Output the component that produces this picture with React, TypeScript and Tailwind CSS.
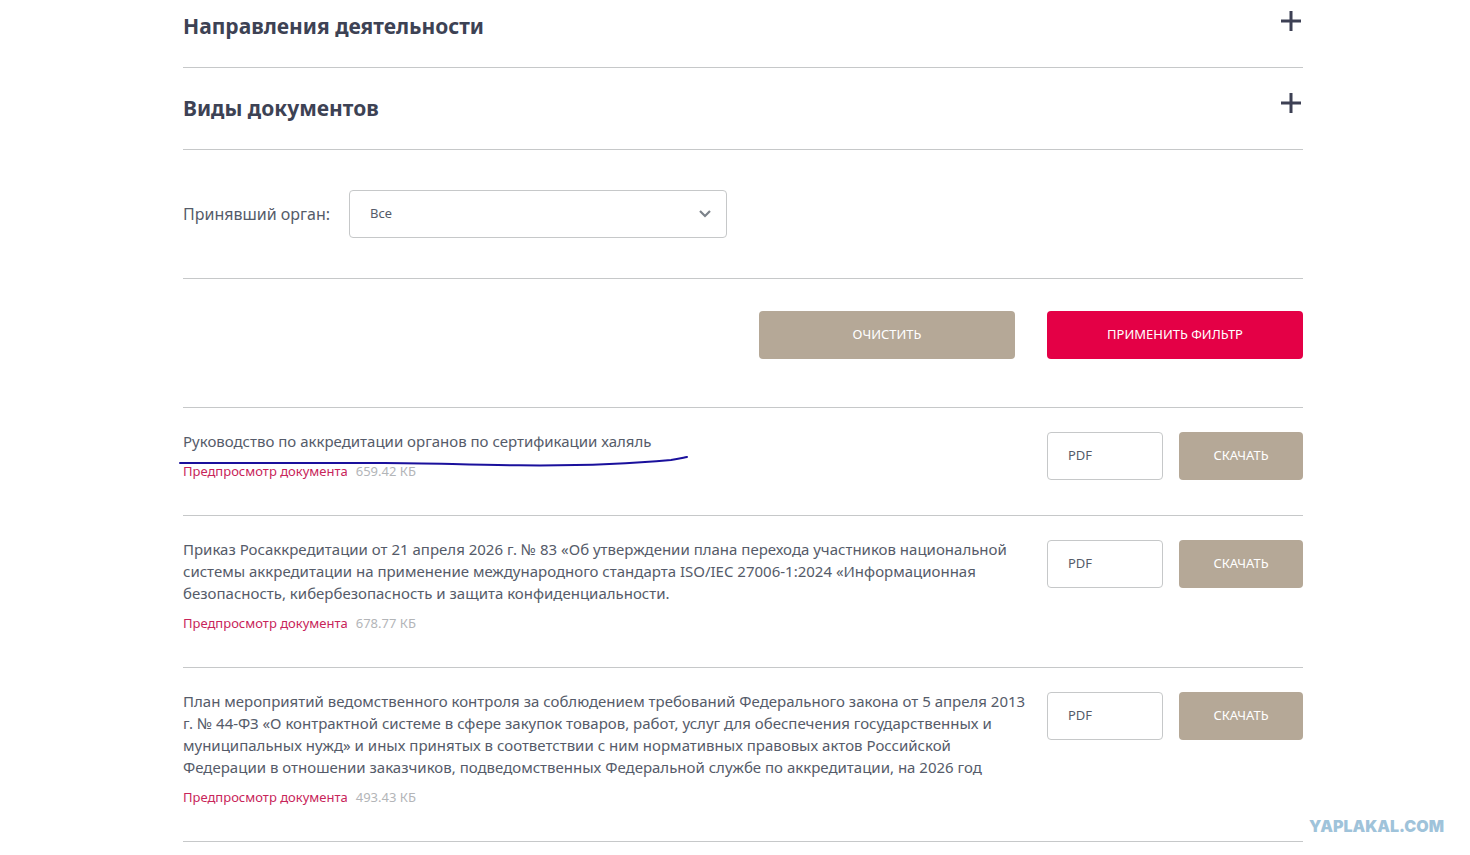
import { useState } from 'react';

type Doc = { lines: string[]; size: string; underlined?: boolean };

const sections = ['Направления деятельности', 'Виды документов'];

const docs: Doc[] = [
  {
    lines: ['Руководство по аккредитации органов по сертификации халяль'],
    size: '659.42 КБ',
    underlined: true,
  },
  {
    lines: [
      'Приказ Росаккредитации от 21 апреля 2026 г. № 83 «Об утверждении плана перехода участников национальной',
      'системы аккредитации на применение международного стандарта ISO/IEC 27006-1:2024 «Информационная',
      'безопасность, кибербезопасность и защита конфиденциальности.',
    ],
    size: '678.77 КБ',
  },
  {
    lines: [
      'План мероприятий ведомственного контроля за соблюдением требований Федерального закона от 5 апреля 2013',
      'г. № 44-ФЗ «О контрактной системе в сфере закупок товаров, работ, услуг для обеспечения государственных и',
      'муниципальных нужд» и иных принятых в соответствии с ним нормативных правовых актов Российской',
      'Федерации в отношении заказчиков, подведомственных Федеральной службе по аккредитации, на 2026 год',
    ],
    size: '493.43 КБ',
  },
];

function Section({ title }: { title: string }) {
  const [open, setOpen] = useState(false);
  return (
    <h2 className="border-b border-[#c6c8c9]">
      <button
        type="button"
        aria-expanded={open}
        onClick={() => setOpen(!open)}
        className="flex w-full items-start justify-between pt-[23px] pb-6 text-left text-[21px] leading-[34px] font-bold text-[#3d4254]"
      >
        {title}
        <svg className="mt-0.5 mr-0.5 h-5 w-5" viewBox="0 0 20 20" fill="none" stroke="#3d4054" strokeWidth="3" aria-hidden="true">
          <path d="M10 0V20M0 10H20" />
        </svg>
      </button>
    </h2>
  );
}

function DocRow({ doc }: { doc: Doc }) {
  return (
    <li className="flex items-start gap-4 border-b border-[#c6c8c9] pt-6 pb-[34px]">
      <div className="-mt-0.5 min-w-0 flex-1">
        <p className="text-[15px] leading-[22px] whitespace-nowrap text-[#555b69]">
          {doc.lines.map((line) => (
            <span key={line} className="block">
              {line}
            </span>
          ))}
        </p>
        <div className="relative mt-[9px] flex gap-2 text-[13px] leading-5">
          <a href="#preview" className="text-[#c8255a]">
            Предпросмотр документа
          </a>
          <span className="text-[#b3b5b8]">{doc.size}</span>
          {doc.underlined && (
            <svg
              className="absolute -top-1.5 -left-1 h-3 w-[512px]"
              viewBox="0 0 512 12"
              fill="none"
              stroke="#1a109c"
              strokeWidth="2"
              strokeLinecap="round"
              aria-hidden="true"
            >
              <path d="M1 8H205C250 8 290 10 340 10.3C410 11 460 8 492 5C499 4 503 3 508 2" />
            </svg>
          )}
        </div>
      </div>
      <div className="flex h-12 w-[116px] items-center rounded-[4px] border border-[#c6c8c9] px-5 text-[13px]">PDF</div>
      <button type="button" className="h-12 w-[124px] rounded-[4px] bg-[#b5a897] text-[13px] text-white">
        СКАЧАТЬ
      </button>
    </li>
  );
}

export default function App() {
  return (
    <div className="relative bg-white pl-4 font-['Noto_Sans',sans-serif] text-[#555b69]">
      <main className="mx-auto max-w-[1120px]">
        <div className="-mt-[14px]">
          {sections.map((title) => (
            <Section key={title} title={title} />
          ))}
        </div>

        <form onSubmit={(e) => e.preventDefault()}>
          <div className="flex items-center gap-[19px] border-b border-[#c6c8c9] py-10">
            <label htmlFor="organ" className="text-[16px]">
              Принявший орган:
            </label>
            <div className="relative w-[378px]">
              <select
                id="organ"
                className="block h-12 w-full appearance-none rounded-[4px] border border-[#c6c8c9] bg-white px-5 text-[13px]"
              >
                <option>Все</option>
              </select>
              <svg
                className="pointer-events-none absolute top-5 right-4 h-2 w-3"
                viewBox="0 0 12 8"
                fill="none"
                stroke="#7c828a"
                strokeWidth="2.2"
                aria-hidden="true"
              >
                <path d="M1 1L6 6L11 1" />
              </svg>
            </div>
          </div>
          <div className="flex justify-end gap-8 border-b border-[#c6c8c9] pt-8 pb-12 text-[13px] text-white">
            <button type="reset" className="h-12 w-64 rounded-[4px] bg-[#b5a897]">
              ОЧИСТИТЬ
            </button>
            <button type="submit" className="h-12 w-64 rounded-[4px] bg-[#e40046]">
              ПРИМЕНИТЬ ФИЛЬТР
            </button>
          </div>
        </form>

        <ul>
          {docs.map((doc) => (
            <DocRow key={doc.size} doc={doc} />
          ))}
        </ul>
      </main>
      <div className="absolute right-[26px] bottom-1 font-['Inter',sans-serif] text-[16px] leading-6 font-black text-[#9fc3da]">
        YAPLAKAL.COM
      </div>
    </div>
  );
}
